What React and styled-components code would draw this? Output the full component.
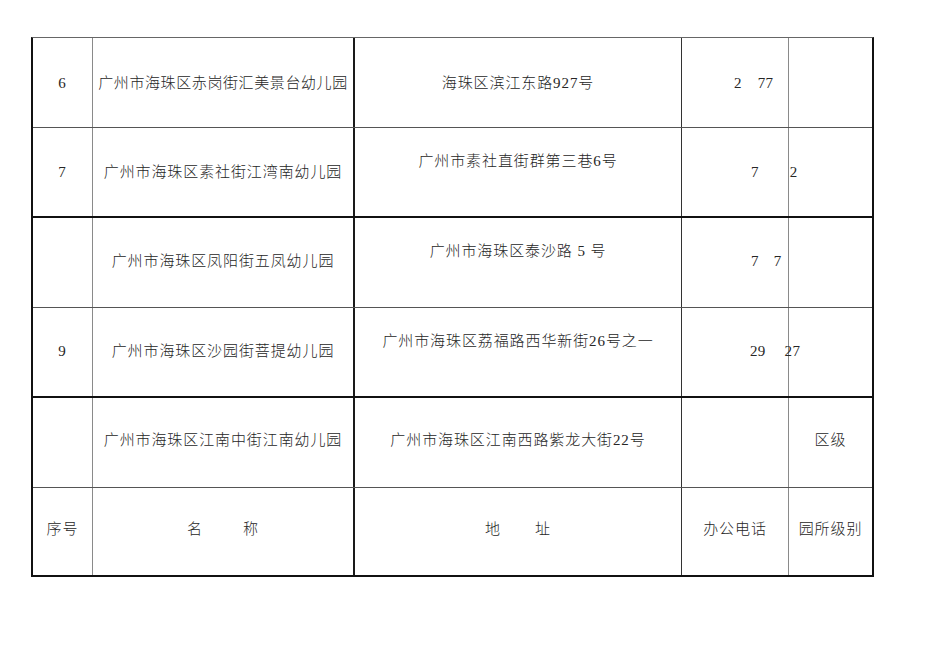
import React from 'react';
import styled, { createGlobalStyle } from 'styled-components';

const Global = createGlobalStyle`
  html, body { margin: 0; padding: 0; background: #fff; }
  body {
    font-family: "Liberation Serif", "Noto Sans CJK SC", serif;
    color: #262626;
  }
`;

const Page = styled.div`
  width: 950px;
  height: 672px;
  box-sizing: border-box;
  padding: 37px 0 0 31px;
`;

const Sheet = styled.div`
  width: 843px;
  box-sizing: border-box;
  border-left: 2px solid #111;
  border-right: 2px solid #111;
  border-top: 1px solid #666;
`;

const Row = styled.div`
  display: grid;
  grid-template-columns: 60px 262px 327px 107px 83px;
  height: ${(p) => p.$h || 90}px;
  box-sizing: border-box;
  border-bottom: ${(p) => (p.$thick ? '2px solid #111' : '1px solid #555')};
`;

const edges = {
  thin: '1px solid #8a8a8a',
  bold: '2px solid #1a1a1a',
  dark: '1px solid #333',
  none: 'none',
};

const Cell = styled.div`
  box-sizing: border-box;
  display: flex;
  justify-content: ${(p) => (p.$left ? 'flex-start' : 'center')};
  align-items: ${(p) => (p.$top ? 'flex-start' : 'center')};
  padding-top: ${(p) => (p.$top ? '23px' : '0')};
  padding-bottom: ${(p) => (p.$top ? 0 : p.$lift || 0)}px;
  padding-left: ${(p) => p.$pad || 0}px;
  border-right: ${(p) => edges[p.$edge || 'none']};
  font-size: 15px;
  font-weight: 300;
  line-height: 20px;
  letter-spacing: ${(p) => (p.$tight ? '0.6px' : '0.9px')};
  white-space: nowrap;
  overflow: visible;
`;

const Spread = styled.span`
  display: inline-flex;
  gap: ${(p) => p.$gap}px;
`;

const Phone = styled.span`
  display: inline-flex;
  gap: ${(p) => p.$gap}px;
  letter-spacing: 0.3px;
`;

const rows = [
  {
    no: '6',
    name: '广州市海珠区赤岗街汇美景台幼儿园',
    tight: true,
    addr: '海珠区滨江东路927号',
    addrTop: false,
    phone: ['2', '77'],
    pad: 52,
    gap: 16,
    level: '',
    thick: false,
    lift: 0,
  },
  {
    no: '7',
    name: '广州市海珠区素社街江湾南幼儿园',
    addr: '广州市素社直街群第三巷6号',
    addrTop: true,
    phone: ['7', '2'],
    pad: 69,
    gap: 31,
    level: '',
    thick: true,
    lift: 0,
  },
  {
    no: '',
    name: '广州市海珠区凤阳街五凤幼儿园',
    addr: '广州市海珠区泰沙路 5 号',
    addrTop: true,
    phone: ['7', '7'],
    pad: 69,
    gap: 15,
    level: '',
    thick: false,
    lift: 3,
  },
  {
    no: '9',
    name: '广州市海珠区沙园街菩提幼儿园',
    addr: '广州市海珠区荔福路西华新街26号之一',
    addrTop: true,
    phone: ['29', '27'],
    pad: 68,
    gap: 19,
    level: '',
    thick: true,
    lift: 3,
  },
  {
    no: '',
    name: '广州市海珠区江南中街江南幼儿园',
    addr: '广州市海珠区江南西路紫龙大街22号',
    addrTop: false,
    phone: null,
    level: '区级',
    thick: false,
    lift: 5,
  },
];

export default function App() {
  return (
    <Page>
      <Global />
      <Sheet>
        {rows.map((r, i) => (
          <Row key={i} $thick={r.thick}>
            <Cell $edge="thin" $lift={r.lift}>{r.no}</Cell>
            <Cell $edge="bold" $tight={r.tight} $lift={r.lift}>{r.name}</Cell>
            <Cell $edge="dark" $top={r.addrTop} $lift={r.lift}>{r.addr}</Cell>
            <Cell $edge="thin" $left $pad={r.pad} $lift={r.lift}>
              {r.phone && (
                <Phone $gap={r.gap}>
                  <span>{r.phone[0]}</span>
                  <span>{r.phone[1]}</span>
                </Phone>
              )}
            </Cell>
            <Cell $lift={r.lift}>{r.level}</Cell>
          </Row>
        ))}
        <Row $thick $h={89}>
          <Cell $edge="thin" $lift={5}>序号</Cell>
          <Cell $edge="bold" $lift={5}>
            <Spread $gap={40}>
              <span>名</span>
              <span>称</span>
            </Spread>
          </Cell>
          <Cell $edge="dark" $lift={5}>
            <Spread $gap={34}>
              <span>地</span>
              <span>址</span>
            </Spread>
          </Cell>
          <Cell $edge="thin" $lift={5}>办公电话</Cell>
          <Cell $lift={5}>园所级别</Cell>
        </Row>
      </Sheet>
    </Page>
  );
}
